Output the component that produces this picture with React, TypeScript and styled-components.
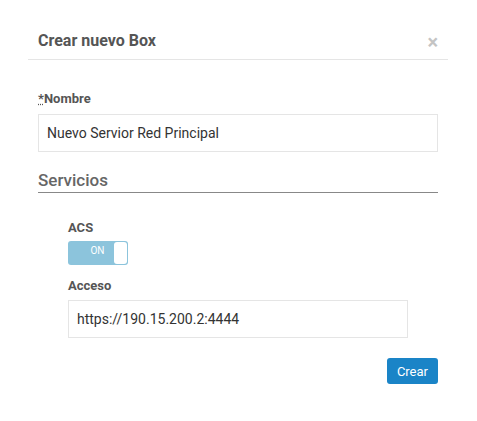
import React from "react";
import styled, { createGlobalStyle } from "styled-components";

const GlobalStyle = createGlobalStyle`
    body {
        margin: 0;
        background: #ffffff;
        font-family: Roboto, "Liberation Sans", sans-serif;
    }
`;

const App = () => {
    return (
        <>
            <GlobalStyle />
            <Modal>
                <Header>
                    <Title>Crear nuevo Box</Title>
                    <Close>×</Close>
                </Header>
                <Body>
                    <Label>
                        <Abbr title="requerido">*</Abbr>Nombre
                    </Label>
                    <Input defaultValue="Nuevo Servior Red Principal" />
                    <SectionTitle>Servicios</SectionTitle>
                    <Nested>
                        <Label $bottom={4}>ACS</Label>
                        <Toggle>
                            <ToggleText>ON</ToggleText>
                            <Knob />
                        </Toggle>
                        <Label $top={12} $bottom={5}>Acceso</Label>
                        <Input defaultValue="https://190.15.200.2:4444" />
                    </Nested>
                    <Footer>
                        <Button>Crear</Button>
                    </Footer>
                </Body>
            </Modal>
        </>
    );
};

export default App;

const Modal = styled.div`
    width: 420px;
    margin-left: 28px;
    padding-top: 28px;
`;

const Header = styled.div`
    display: flex;
    align-items: center;
    justify-content: space-between;
    height: 31px;
    padding: 0 10px;
    border-bottom: 1px solid #e5e5e5;
`;

const Title = styled.h4`
    margin: 0;
    font-size: 16px;
    font-weight: 700;
    color: #555555;
    line-height: 26px;
    margin-top: -6px;
`;

const Close = styled.span`
    font-size: 20px;
    font-weight: 700;
    color: #c4c4c4;
    line-height: 20px;
    margin-top: -3px;
`;

const Body = styled.div`
    padding: 30px 10px 0;
`;

const Label = styled.label<{ $top?: number; $bottom?: number }>`
    display: block;
    font-size: 13px;
    font-weight: 700;
    color: #555555;
    line-height: 18px;
    margin-top: ${(p) => p.$top ?? 0}px;
    margin-bottom: ${(p) => p.$bottom ?? 6}px;
`;

const Abbr = styled.abbr`
    text-decoration: underline dotted;
    cursor: help;
`;

const Input = styled.input`
    display: block;
    box-sizing: border-box;
    width: 100%;
    height: 38px;
    margin: 0;
    padding: 0 8px;
    border: 1px solid #e5e5e5;
    border-radius: 0;
    font-family: Roboto, "Liberation Sans", sans-serif;
    font-size: 14px;
    color: #333333;
    background: #ffffff;
    outline: none;
`;

const SectionTitle = styled.h5`
    margin: 18px 0 0;
    padding-bottom: 2px;
    font-size: 17px;
    font-weight: 500;
    line-height: 20px;
    color: #666666;
    border-bottom: 1px solid #888888;
`;

const Nested = styled.div`
    padding: 26px 30px 0;
`;

const Toggle = styled.div`
    display: flex;
    align-items: stretch;
    box-sizing: border-box;
    width: 60px;
    height: 24px;
    padding: 1px;
    border-radius: 3px;
    background: #8cc4dc;
`;

const ToggleText = styled.span`
    flex: 1;
    font-size: 10px;
    color: #ffffff;
    line-height: 18px;
    text-align: center;
    padding-left: 12px;
`;

const Knob = styled.span`
    width: 13px;
    border-radius: 3px;
    background: #ffffff;
`;

const Footer = styled.div`
    display: flex;
    justify-content: flex-end;
    padding-top: 20px;
`;

const Button = styled.button`
    height: 26px;
    padding: 0 10px;
    border: none;
    border-radius: 3px;
    background: #1a84c7;
    color: #ffffff;
    font-family: Roboto, "Liberation Sans", sans-serif;
    font-size: 13px;
`;
